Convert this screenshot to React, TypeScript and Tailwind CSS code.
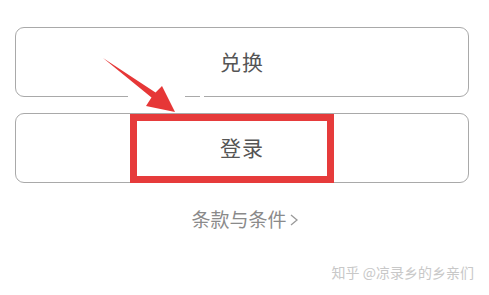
import React from 'react';

const cjk = { fontFamily: '"Noto Sans CJK SC", "Noto Sans", sans-serif' };

function Arrow() {
  // 红色箭头，从左上指向"登录"
  return (
    <svg
      className="absolute left-0 top-0 pointer-events-none"
      width={489}
      height={295}
      viewBox="0 0 489 295"
    >
      <polygon
        points="103,58 155.5,92.5 162,86 175,112 146,106 151.5,97.5"
        fill="#e63737"
      />
    </svg>
  );
}

export default function App() {
  return (
    <div className="relative w-[489px] h-[295px] bg-white overflow-hidden" style={cjk}>
      <div className="flex flex-col pt-[27px] px-[15px]">
        <div className="h-[70px] w-[454px] rounded-[9px] border border-[#a9a9a9] flex items-center justify-center">
          <span className="text-[21px] text-[#555] tracking-[1px]">兑换</span>
        </div>
        <div className="relative mt-[16px] h-[70px] w-[454px] rounded-[9px] border border-[#a9a9a9] flex items-center justify-center">
          <span className="text-[21px] text-[#555] tracking-[1px]">登录</span>
          <div className="absolute left-[114px] top-0 w-[204px] h-[69px] border-[7px] border-[#e63b3b]" />
        </div>
        <div className="mt-[24px] flex items-center justify-center pl-[2px]">
          <span className="text-[19px] leading-[24px] text-[#8a8a8a]">条款与条件</span>
          <svg width="12" height="16" viewBox="0 0 12 16" className="ml-[1px] mt-[1px]">
            <polyline points="3,3 9,8 3,13" fill="none" stroke="#9a9a9a" strokeWidth="1.3" />
          </svg>
        </div>
        <div className="mt-[31px] flex justify-end pr-[0px]">
          <span className="text-[14px] leading-[20px] text-[#c8c8c8]">知乎 @凉录乡的乡亲们</span>
        </div>
      </div>
      {/* 箭头旁边的白色缺口 */}
      <div className="absolute left-[128px] top-[96px] w-[57px] h-[3px] bg-white" />
      <div className="absolute left-[200px] top-[96px] w-[4px] h-[3px] bg-white" />
      <Arrow />
    </div>
  );
}
